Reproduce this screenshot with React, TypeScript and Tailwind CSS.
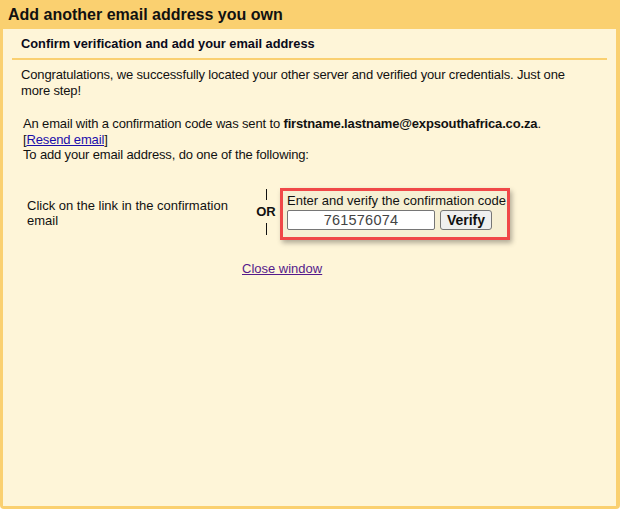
import React from "react";

export default function App() {
  const font = { fontFamily: '"Liberation Sans", Arial, sans-serif' };
  return (
    <div
      className="w-[620px] h-[509px] bg-[#fad070] flex flex-col rounded-b-[4px] text-black"
      style={font}
    >
      <div className="h-[29px] flex items-center pl-[8px] pt-[1px]">
        <span className="text-[16px] font-bold leading-none text-[#111]">
          Add another email address you own
        </span>
      </div>
      <div className="flex-1 ml-[3px] mr-[4px] mb-[3px] bg-[#fef5d8] flex flex-col">
        <div className="mx-[9px] pt-[7px] pb-[6px] border-b-[2px] border-[#fad070] px-[9px]">
          <div className="text-[12.8px] font-bold leading-[16px] text-[#0a0a1a]">
            Confirm verification and add your email address
          </div>
        </div>
        <div className="pl-[18px] pr-[20px] pt-[7px] text-[13px] leading-[16px] text-[#111]">
          <p className="tracking-[-0.15px]">
            Congratulations, we successfully located your other server and verified your
            credentials. Just one more step!
          </p>
          <div className="mt-[17px] pl-[2px] leading-[15.5px] tracking-[-0.15px]">
            <div>
              An email with a confirmation code was sent to{" "}
              <b>firstname.lastname@expsouthafrica.co.za</b>.
            </div>
            <div>
              [<a href="#" className="text-[#1a0dab] underline">Resend email</a>]
            </div>
            <div>To add your email address, do one of the following:</div>
          </div>
          <div className="mt-[24px] flex items-start">
            <div className="w-[228px] pl-[6px] pt-[11px] leading-[15px]">
              Click on the link in the confirmation email
            </div>
            <div className="w-[34px] flex flex-col items-center pt-[2px] text-[13px]">
              <div className="w-[1px] h-[11px] bg-[#111]" />
              <span className="font-bold leading-[13px] my-[5px]">OR</span>
              <div className="w-[1px] h-[12px] bg-[#111]" />
            </div>
            <div className="w-[230px] h-[52px] -ml-[3px] border-[3px] border-[#f04848] bg-[#f6efd3] shadow-[2px_3px_5px_rgba(0,0,0,0.3)] pl-[4px] pt-[3px] mt-[1px]">
              <div className="leading-[14px] text-[13px]">Enter and verify the confirmation code</div>
              <div className="flex items-center mt-[2px]">
                <div className="w-[148px] h-[20px] bg-white border border-[#767676] rounded-[2px] flex items-center justify-center text-[14.5px] text-[#444] tracking-[0.2px]">
                  761576074
                </div>
                <button className="ml-[5px] w-[52px] h-[20px] bg-[#efefef] border border-[#767676] rounded-[3px] text-[14px] font-bold leading-none flex items-center justify-center">
                  Verify
                </button>
              </div>
            </div>
          </div>
          <div className="mt-[21px] pl-[221px]">
            <a href="#" className="text-[#551a8b] underline text-[13px]">
              Close window
            </a>
          </div>
        </div>
      </div>
    </div>
  );
}
